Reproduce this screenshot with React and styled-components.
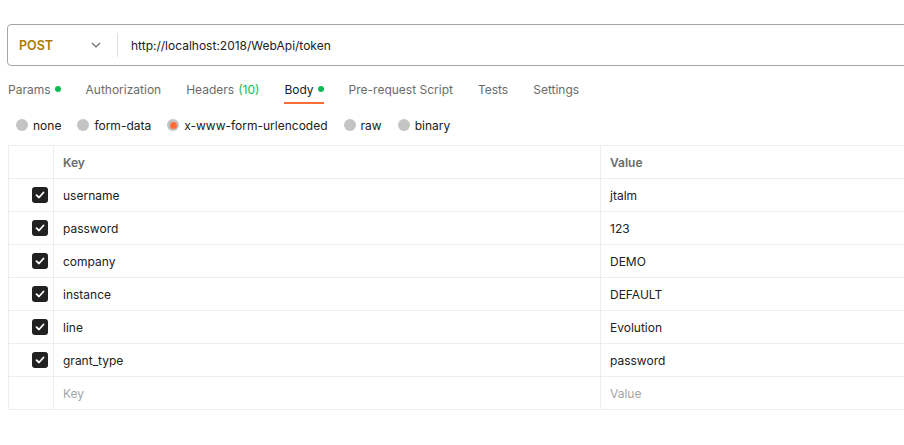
import { createGlobalStyle, styled } from "styled-components";

const GlobalStyle = createGlobalStyle`
  html, body {
    margin: 0;
    padding: 0;
    background: #ffffff;
    overflow: hidden;
  }
  body {
    font-family: Inter, "Noto Sans", "Liberation Sans", sans-serif;
    font-size: 12px;
    color: #212121;
  }
`;

const Page = styled.div`
  width: 940px;
  height: 445px;
  padding: 24px 0 0 7px;
  box-sizing: border-box;
`;

const RequestBar = styled.div`
  display: flex;
  align-items: center;
  height: 42px;
  box-sizing: border-box;
  border: 1px solid #a6a6a6;
  border-radius: 4px;
`;

const Method = styled.div`
  display: flex;
  align-items: center;
  justify-content: space-between;
  width: 110px;
  box-sizing: border-box;
  padding: 0 16px 0 11px;
  height: 24px;
  border-right: 1px solid #e0e0e0;
  font-weight: 600;
  font-size: 12.5px;
  color: #ad7a03;
`;

const Url = styled.div`
  padding-left: 13px;
  color: #212121;
`;

const Tabs = styled.div`
  display: flex;
  margin: 8px 0 0 1px;
`;

const Tab = styled.div`
  position: relative;
  display: flex;
  align-items: center;
  height: 30px;
  margin-right: 25px;
  color: ${(p) => (p.$active ? "#212121" : "#6b6b6b")};
  &::after {
    content: "";
    display: ${(p) => (p.$active ? "block" : "none")};
    position: absolute;
    left: 0;
    right: 0;
    bottom: 0;
    height: 2px;
    background: #ff6c37;
  }
`;

const Dot = styled.span`
  width: 6px;
  height: 6px;
  border-radius: 50%;
  background: #0cbb52;
  margin-left: 4px;
`;

const Count = styled.span`
  color: #0cbb52;
  margin-left: 4px;
`;

const RadioRow = styled.div`
  display: flex;
  align-items: center;
  height: 24px;
  margin: 9px 0 0 9px;
  gap: 16px;
`;

const RadioItem = styled.label`
  display: flex;
  align-items: center;
  gap: 5px;
  color: #212121;
`;

const Radio = styled.span`
  display: flex;
  align-items: center;
  justify-content: center;
  width: 12px;
  height: 12px;
  border-radius: 50%;
  background: #c4c4c4;
  &::after {
    content: "";
    display: ${(p) => (p.$checked ? "block" : "none")};
    width: 7px;
    height: 7px;
    border-radius: 50%;
    background: #ff6c37;
  }
`;

const Table = styled.div`
  margin: 8px 0 0 1px;
  border-top: 1px solid #ededed;
  border-left: 1px solid #ededed;
`;

const Row = styled.div`
  display: grid;
  grid-template-columns: 45px 547px 1fr;
  height: 33px;
  border-bottom: 1px solid #ededed;
  box-sizing: border-box;
`;

const Cell = styled.div`
  display: flex;
  align-items: center;
  padding-left: 9px;
  border-right: 1px solid #ededed;
  font-weight: ${(p) => (p.$head ? 600 : 400)};
  color: ${(p) => (p.$head ? "#6b6b6b" : p.$placeholder ? "#a6a6a6" : "#212121")};
`;

const CheckCell = styled.div`
  display: flex;
  align-items: center;
  justify-content: flex-end;
  padding-right: 5px;
  border-right: 1px solid #ededed;
`;

const Checkbox = styled.span`
  display: flex;
  align-items: center;
  justify-content: center;
  width: 16px;
  height: 16px;
  border-radius: 3px;
  background: #212121;
`;

const rows = [
  ["username", "jtalm"],
  ["password", "123"],
  ["company", "DEMO"],
  ["instance", "DEFAULT"],
  ["line", "Evolution"],
  ["grant_type", "password"],
];

const Check = () => (
  <svg width="10" height="10" viewBox="0 0 10 10">
    <path d="M1.5 5.2 L4 7.5 L8.5 2.5" fill="none" stroke="#fff" strokeWidth="1.8" strokeLinecap="round" strokeLinejoin="round" />
  </svg>
);

const Chevron = () => (
  <svg width="10" height="6" viewBox="0 0 10 6">
    <path d="M1 1 L5 5 L9 1" fill="none" stroke="#6b6b6b" strokeWidth="1.2" />
  </svg>
);

const App = () => {
  return (
    <Page>
      <GlobalStyle />
      <RequestBar>
        <Method>
          POST
          <Chevron />
        </Method>
        <Url>http://localhost:2018/WebApi/token</Url>
      </RequestBar>

      <Tabs>
        <Tab>
          Params<Dot />
        </Tab>
        <Tab>Authorization</Tab>
        <Tab>
          Headers<Count>(10)</Count>
        </Tab>
        <Tab $active>
          Body<Dot />
        </Tab>
        <Tab>Pre-request Script</Tab>
        <Tab>Tests</Tab>
        <Tab>Settings</Tab>
      </Tabs>

      <RadioRow>
        {["none", "form-data", "x-www-form-urlencoded", "raw", "binary"].map((t) => (
          <RadioItem key={t}>
            <Radio $checked={t === "x-www-form-urlencoded"} />
            {t}
          </RadioItem>
        ))}
      </RadioRow>

      <Table>
        <Row>
          <CheckCell />
          <Cell $head>Key</Cell>
          <Cell $head>Value</Cell>
        </Row>
        {rows.map(([k, v]) => (
          <Row key={k}>
            <CheckCell>
              <Checkbox>
                <Check />
              </Checkbox>
            </CheckCell>
            <Cell>{k}</Cell>
            <Cell>{v}</Cell>
          </Row>
        ))}
        <Row>
          <CheckCell />
          <Cell $placeholder>Key</Cell>
          <Cell $placeholder>Value</Cell>
        </Row>
      </Table>
    </Page>
  );
};

export default App;
